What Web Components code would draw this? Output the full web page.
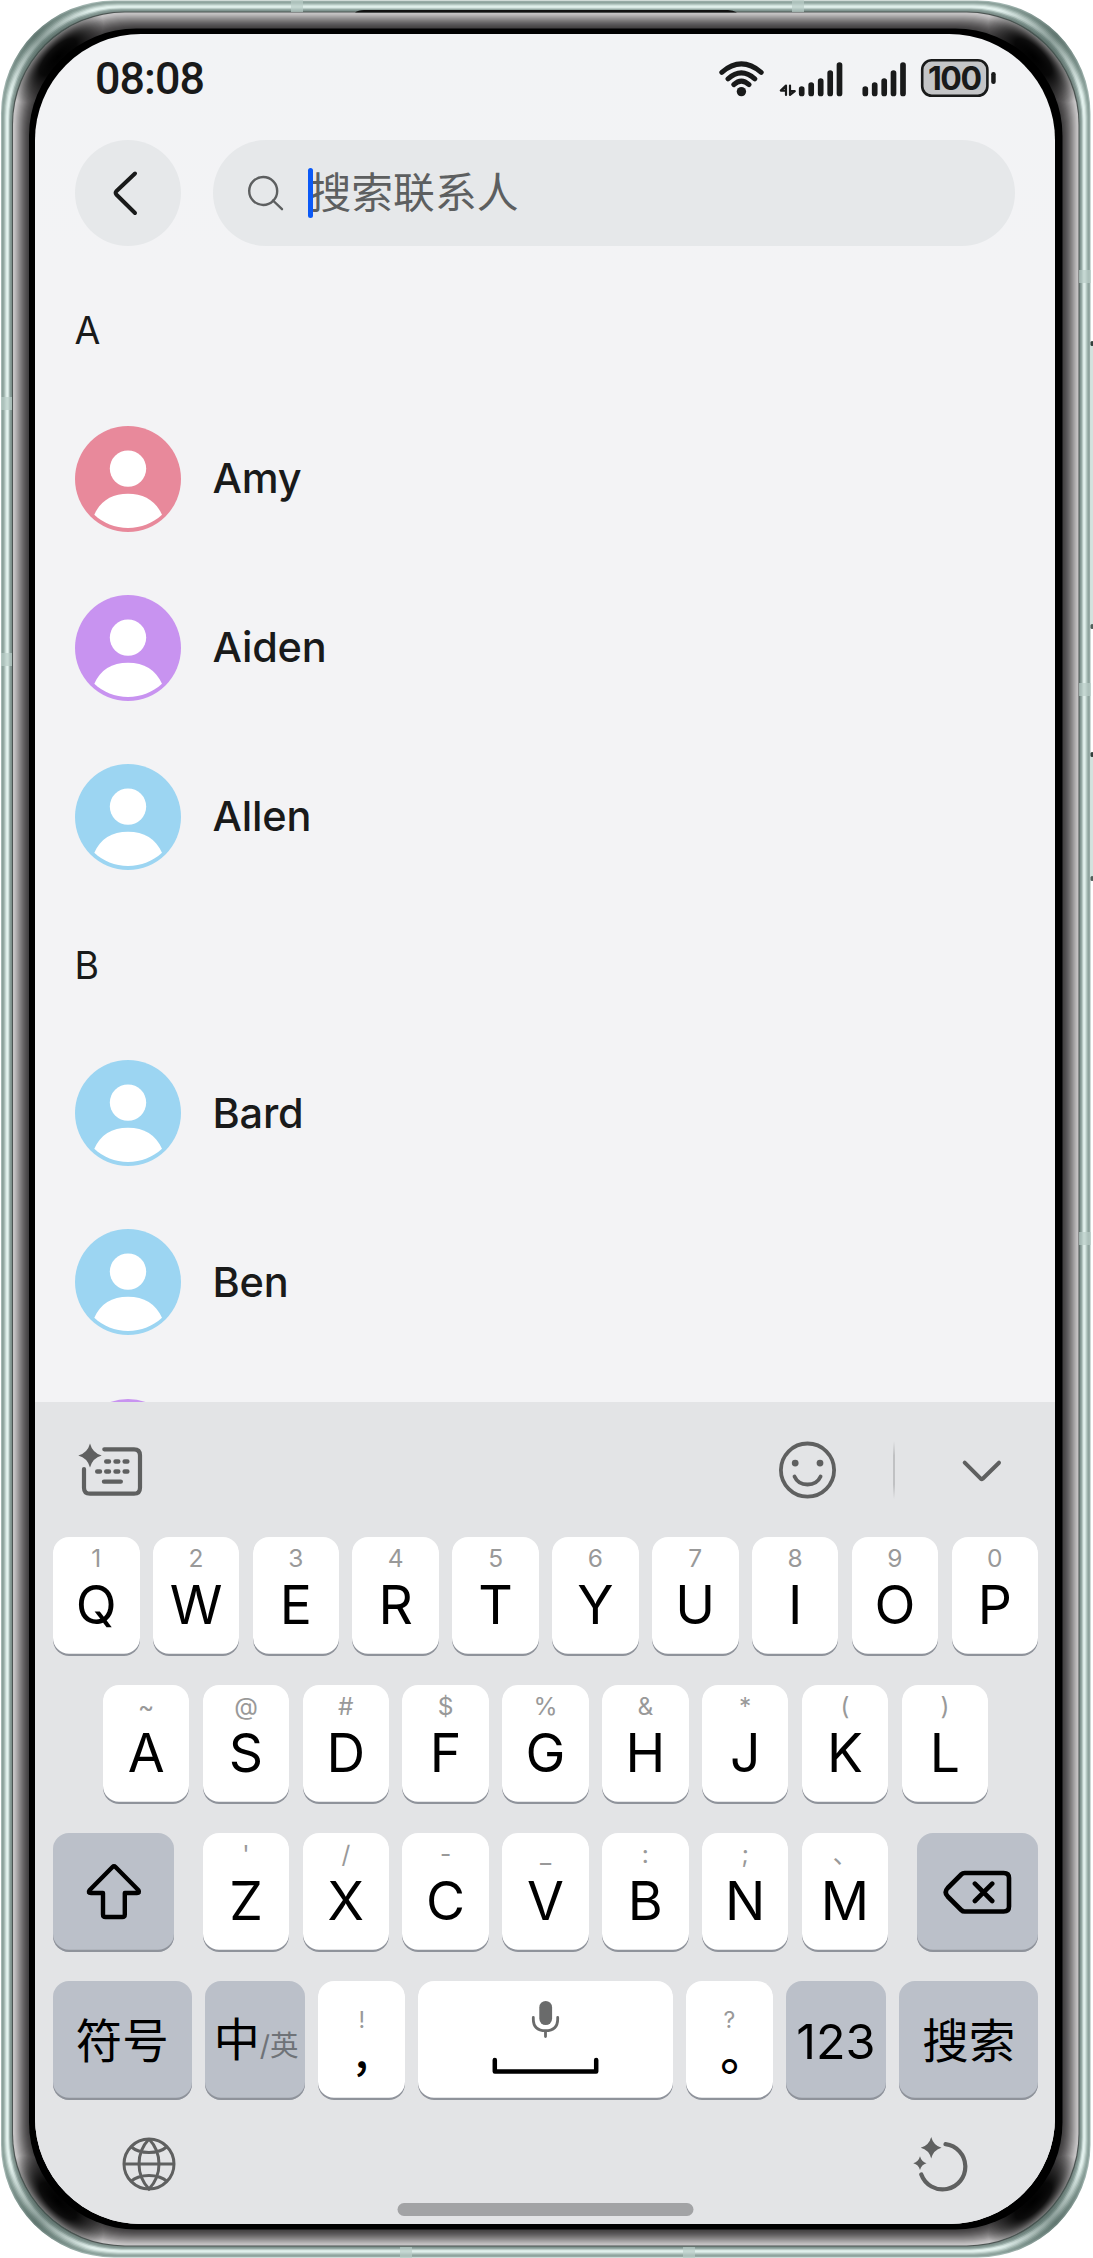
<!DOCTYPE html>
<html lang="zh-CN">
<head>
<meta charset="utf-8">
<title>搜索联系人</title>
<style>
body{margin:0;background:#fff;font-family:Inter,"Noto Sans CJK SC",sans-serif;color:#191a1a}
</style>
</head>
<body>
<phone-shell>
  <status-bar></status-bar>
  <search-header></search-header>
  <contact-list>
    <section-title>A</section-title>
    <contact-row color="#e8899b">Amy</contact-row>
    <contact-row color="#c893f0">Aiden</contact-row>
    <contact-row color="#9cd5f2">Allen</contact-row>
    <section-title>B</section-title>
    <contact-row color="#9cd5f2">Bard</contact-row>
    <contact-row color="#9cd5f2">Ben</contact-row>
    <contact-row color="#c893f0"></contact-row>
  </contact-list>
  <soft-keyboard></soft-keyboard>
</phone-shell>
<script>
const define = (name, html, setup) => customElements.define(name, class extends HTMLElement {
  constructor(){ super(); this.attachShadow({mode:'open'}); }
  connectedCallback(){ this.shadowRoot.innerHTML = html; if (setup) setup(this, this.shadowRoot); }
});

/* Metal rim and glass edge: nested rounded rectangles, outermost first */
define('phone-frame', `<style>:host{display:block;position:absolute;inset:0;z-index:-1}svg{display:block}</style><svg width="1093" height="2258"></svg>`, (el, root) => {
  const rim = ['#a3b7b2','#8ba09a','#93a8a2','#a9bdb7','#c5d6d1','#dcebe7','#e4f3ef','#cfdfdb','#a3b6b1','#879b96','#7d908b','#4d5553'];
  const glass = ['#c6c4c5','#c2c0c1','#b8b6b7','#adabac','#a2a0a1','#979596','#8c8a8b','#828081','#787677','#6e6c6d','#656364','#5d5b5c','#555354','#4e4c4d','#484647','#424142','#000'];
  const box = (i, c) => `<rect x="${1+i}" y="${.5+i}" width="${1089.5-2*i}" height="${2257-2*i}" rx="${i < 12 ? 113-i*.1 : 112-(i-12)*.3}" fill="${c}"/>`;
  let s = '';
  rim.forEach((c,i) => s += box(i,c));
  glass.forEach((c,i) => s += box(12+i,c));
  const seams = [[291,0,12,12],[792,0,12,12],[400,2247,12,11],[683,2247,12,11],[1,397,11,13],[1,653,11,13],[1079,270,12,13],[1079,683,12,13],[1079,1232,12,13]];
  seams.forEach(([x,y,w,h]) => s += `<rect x="${x}" y="${y}" width="${w}" height="${h}" fill="#b9cdc7" opacity=".7"/>`);
  s += `<path d="M355 12.5Q358 10 364 10H728Q733 10 737 12.5Z" fill="#111"/>`;
  s += `<defs><radialGradient id="g"><stop offset="0" stop-color="#000"/><stop offset=".4" stop-color="#000" stop-opacity=".9"/><stop offset="1" stop-color="#000" stop-opacity="0"/></radialGradient><radialGradient id="r"><stop offset="0" stop-color="#3c524c" stop-opacity=".55"/><stop offset="1" stop-color="#3c524c" stop-opacity="0"/></radialGradient>
  <clipPath id="c"><rect x="13" y="12.5" width="1065.5" height="2233" rx="112"/></clipPath><clipPath id="o"><path clip-rule="evenodd" d="M114 .5H977.5A113 113 0 0 1 1090.5 113.5V2144.5A113 113 0 0 1 977.5 2257.5H114A113 113 0 0 1 1 2144.5V113.5A113 113 0 0 1 114 .5ZM125 12.5A112 112 0 0 0 13 124.5V2133.5A112 112 0 0 0 125 2245.5H966.5A112 112 0 0 0 1078.5 2133.5V124.5A112 112 0 0 0 966.5 12.5Z"/></clipPath></defs>`;
  [[1,1,0,0],[-1,1,1091.5,0],[1,-1,0,2258],[-1,-1,1091.5,2258]].forEach(([a,b,x,y]) => {
    s += `<g clip-path="url(#c)"><ellipse transform="translate(${x} ${y}) scale(${a} ${b}) rotate(-45 58 57)" cx="58" cy="57" rx="60" ry="23" fill="url(#g)"/></g><g clip-path="url(#o)"><circle cx="${x+a*36}" cy="${y+b*36}" r="62" fill="url(#r)"/></g>`;
  });
  [[343,627],[754,879]].forEach(([t,b]) => s += `<rect x="1090.5" y="${t}" width="3" height="${b-t}" fill="#d3e3de"/><rect x="1090.5" y="${t-2}" width="3" height="5" rx="1.5" fill="#32403c"/><rect x="1090.5" y="${b-3}" width="3" height="5" rx="1.5" fill="#50605b"/>`);
  root.querySelector('svg').innerHTML = s;
});

define('phone-shell', `<style>
:host{display:block;position:relative;z-index:0;box-sizing:border-box;width:1093px;height:2258px;padding:34px 38px 34px 35px;overflow:hidden}
.screen{display:flex;flex-direction:column;width:1020px;height:2190px;border-radius:106px;overflow:hidden;background:linear-gradient(#f2f3f5,#f3f3f5 240px)}
</style><phone-frame></phone-frame><div class="screen"><slot></slot></div>`);

define('status-bar', `<style>
:host{display:flex;justify-content:space-between;align-items:center;height:106px;box-sizing:border-box;padding:0 58px 17px 60px;flex:none}
time{font:500 44.8px/50px Roboto,sans-serif;letter-spacing:-.9px}
svg{display:block;margin-top:-1px}
</style><time>08:08</time>
<svg width="280" height="40" viewBox="717 57 280 40" fill="none" stroke="#191a1a" stroke-linecap="round">
<g stroke-width="5"><path d="M721.8 71.3Q741.3 54.6 761.2 71.3M728 77.8Q741.3 66 754.8 77.8M733.8 83.6Q741.3 76.5 749 83.6"/></g><circle cx="741.4" cy="90.6" r="4.7" fill="#191a1a" stroke="none"/>
<g stroke-width="5.7"><path d="M801.7 88V92.4M811.2 84V92.4M820.7 80V92.4M830.2 72V92.4M839.5 64V92.4M865.3 88V92.4M874.7 84V92.4M884.2 80V92.4M893.5 72V92.4M903 64V92.4"/></g>
<path d="M786 94V84.5L780.8 89.6H785M790 84.5V94L794.8 90.2H791" stroke-width="2.2" stroke-linejoin="round"/>
<rect x="922.2" y="59.2" width="65.2" height="35.6" rx="9.5" stroke-width="2.6" fill="#c4c5c7"/>
<rect x="991.2" y="71" width="4.5" height="12" rx="2.2" fill="#191a1a" stroke="none"/>
<text x="955" y="88.7" font-family="Inter,sans-serif" font-weight="700" font-size="32" text-anchor="middle" textLength="54" fill="#191a1a" stroke="none">100</text>
</svg>`);

define('search-header', `<style>
:host{display:flex;gap:32px;padding:0 40px;height:106px;margin-bottom:21px;flex:none}
.back{width:106px;border-radius:53px;background:#e6e8ea;display:flex;align-items:center;justify-content:center}
.field{flex:1;border-radius:53px;background:#e6e8ea;display:flex;align-items:center;padding-left:34px;color:#5d5f60;font-size:41.8px;line-height:60px}
.field svg{margin-right:24px}
i{width:5px;height:50px;border-radius:3px;background:#0a59f7;z-index:1;margin-right:-3.5px}
</style><div class="back"><svg width="60" height="60" viewBox="98 163 60 60" fill="none" stroke="#191a1a" stroke-width="4" stroke-linecap="round" stroke-linejoin="round"><path d="M135 173.5L116.3 191.3Q115 192.9 116.3 194.5L135 213"/></svg></div>
<div class="field"><svg width="37" height="37" viewBox="247 175 37 37" fill="none" stroke="#5d5f60" stroke-width="2.4" stroke-linecap="round"><circle cx="263.2" cy="191" r="14"/><path d="M273 200.5L282 209.2"/></svg><i></i><span>搜索联系人</span></div>`);

define('contact-list', `<style>:host{display:flex;flex-direction:column;height:1135px;overflow:hidden;flex:none}</style><slot></slot>`);

define('section-title', `<style>:host{display:flex;align-items:center;height:127px;padding:0 39.5px;flex:none;font-size:37.5px}</style><slot></slot>`);

define('contact-row', `<style>
:host{display:flex;align-items:center;gap:31.5px;height:169.2px;padding-left:40px;flex:none;font-size:41.5px;font-weight:460;letter-spacing:-.2px}
span{margin-top:-1px}
</style><svg width="106" height="106" viewBox="0 0 106 106"><circle class="bg" cx="53" cy="53" r="53"/><g fill="#fff"><circle cx="53" cy="42.6" r="18.2"/><path d="M19.3 88.8C25 75 37 67.8 53 67.8S81 75 87 88.8C78 97 66 102 53 102S28 97 19.3 88.8Z"/></g></svg><span><slot></slot></span>`, (el, root) => root.querySelector('.bg').setAttribute('fill', el.getAttribute('color')));

define('key-cap', `<style>
:host{display:block;width:86.6px;flex:none}
div{box-sizing:border-box;height:118.6px;border-radius:16px;background:#fff;box-shadow:inset 0 -2.2px #8f939b;display:flex;flex-direction:column;align-items:center;color:#000}
:host([dark]) div{background:#bbc0c9;justify-content:center;padding-bottom:1px}
small{height:42px;line-height:42px;font-size:24.5px;color:#999;white-space:pre}
b{font-weight:400;font-size:53.5px;line-height:50px;height:50px;padding-top:.8px}
:host([dark]) b{display:flex;align-items:center;height:auto}
:host([low]) small{padding-top:17.5px;height:42px;font-size:23px}
:host([low]) b{line-height:24px;height:24px;padding:0}
</style><div><small hidden></small><b><slot></slot></b></div>`, (el, root) => {
  const hint = el.getAttribute('hint'), small = root.querySelector('small');
  if (hint) { small.hidden = false; small.textContent = hint; } else small.remove();
  if (el.hasAttribute('wide')) el.style.width = el.getAttribute('wide') + 'px';
});

const keys = (letters, hints) => [...letters].map((c,i) => `<key-cap hint="${hints[i] === '&' ? '&amp;' : hints[i]}">${c}</key-cap>`).join('');
define('soft-keyboard', `<style>
:host{display:flex;flex-direction:column;height:822px;background:#e3e4e6;flex:none}
svg{display:block;flex:none}
.tools{height:135px;display:flex;align-items:center;justify-content:space-between;padding:0 52.5px 0 43px}
.right{display:flex;align-items:center}
.line{width:2px;height:58px;margin:0 66px 0 56px;background:linear-gradient(#c2c3c500,#c0c1c3 25%,#c0c1c3 75%,#c2c3c500)}
.row{display:flex;justify-content:center;gap:13.25px;height:118.6px;margin-bottom:29.5px;padding-left:1px}
.three{gap:28px;padding:0 17px 0 18px;justify-content:space-between}
.three>span{display:flex;gap:13.25px}
.four{margin-bottom:0}
.cn{font-size:46.5px;line-height:60px;padding-top:2px}
.lang{display:flex;align-items:baseline;padding:5px 0 0 2px}
.lang small{font-size:28.5px;color:#6f7378}
.num{font-size:48.5px;padding-top:3px}
.comma{font:500 46px/24px "Noto Sans CJK SC",sans-serif;display:block;margin-top:-5px}
.dot{font:500 48px/24px "Noto Sans CJK SC",sans-serif;padding-left:30px;display:block;margin-top:-4px}
.mic{display:flex;flex-direction:column;align-items:center;height:118px}
.bottom{display:flex;justify-content:space-between;padding:36px 87px 0 86px}
.home{width:296px;height:13px;border-radius:7px;background:#a2a3a5;margin:11.5px auto 0;transform:translateX(.5px)}
</style>
<div class="tools">
<svg width="66" height="56" viewBox="78 1442 66 56" fill="none" stroke="#5f6060" stroke-linecap="round" stroke-width="4.2"><path d="M104.3 1449.3H134Q140 1449.3 140 1455.3V1487.7Q140 1493.7 134 1493.7H90Q84 1493.7 84 1487.7V1469"/><path d="M106.2 1461.5H109M115.5 1461.5H118.3M124.6 1461.5H127.4M97.2 1471.5H100M106.2 1471.5H109M115.5 1471.5H118.3M124.6 1471.5H127.4M104 1481.6H120.8" stroke-width="4.4"/><path d="M90 1443.5Q92.5 1453 101.7 1455.5Q92.5 1458 90 1467.5Q87.5 1458 78.3 1455.5Q87.5 1453 90 1443.5Z" fill="#5f6060" stroke="none"/></svg>
<div class="right"><svg width="58" height="58" viewBox="779 1440.5 58 58" fill="none" stroke="#5f6060" stroke-width="3.8" stroke-linecap="round"><circle cx="807.5" cy="1469.6" r="26.6"/><path d="M794.5 1476Q798 1484 807.5 1484T820.6 1476"/><g fill="#5f6060" stroke="none"><circle cx="795.2" cy="1462.6" r="3.4"/><circle cx="820" cy="1462.6" r="3.4"/></g></svg><span class="line"></span><svg width="42" height="26" viewBox="961 1457.5 42 26" fill="none" stroke="#5f6060" stroke-width="4" stroke-linecap="round" stroke-linejoin="round"><path d="M964.7 1463.2L980.7 1479.2Q981.7 1480 982.7 1479.2L999 1463.2"/></svg></div>
</div>
<div class="row">${keys('QWERTYUIOP','1234567890')}</div>
<div class="row">${keys('ASDFGHJKL','~@#$%&*()')}</div>
<div class="row three"><key-cap dark wide="121.3"><svg width="60" height="60" viewBox="83.5 1862 60 60" fill="none" stroke="#000" stroke-width="4.4" stroke-linejoin="round"><path d="M112 1867Q113.5 1865.5 115 1867L138 1890.3Q139.5 1893 136.5 1893H124.3V1914.5Q124.3 1917 121.8 1917H105Q102.5 1917 102.5 1914.5V1893H90.5Q87 1893 89 1890.3Z"/></svg></key-cap><span>${keys('ZXCVBNM',"'/-_:;、")}</span><key-cap dark wide="121.3"><svg width="70" height="60" viewBox="942.3 1861.5 70 60" fill="none" stroke="#000" stroke-width="4.6" stroke-linecap="round" stroke-linejoin="round"><path d="M965 1872.5H1004Q1009.3 1872.5 1009.3 1877.5V1906Q1009.3 1911 1004 1911H965Q963 1911 961.5 1909.5L948 1896Q944 1891.7 948 1887.5L961.5 1874Q963 1872.5 965 1872.5ZM975.2 1883.2L992.5 1900.5M992.5 1883.2L975.2 1900.5"/></svg></key-cap></div>
<div class="row four"><key-cap dark wide="139.2"><span class="cn">符号</span></key-cap><key-cap dark wide="100"><span class="cn lang"><span style="font-size:46px">中</span><small>/英</small></span></key-cap><key-cap low hint="!"><span class="comma">,</span></key-cap><key-cap wide="254.5"><span class="mic"><svg width="110" height="118" viewBox="491 1982 110 118" fill="none"><rect x="539.3" y="2001" width="12.8" height="24" rx="6.4" fill="#6a6b6b"/><path d="M533.3 2017.5V2019Q533.3 2030.7 545.5 2030.7T557.7 2019V2017.5M545.5 2031V2036.5" stroke="#6a6b6b" stroke-width="2.8" stroke-linecap="round"/><path d="M494.8 2060V2071.6H596.2V2060" stroke="#000" stroke-width="4.5" stroke-linecap="round" stroke-linejoin="round"/></svg></span></key-cap><key-cap low hint="?"><span class="dot">。</span></key-cap><key-cap dark wide="100"><span class="num">123</span></key-cap><key-cap dark wide="139.2"><span class="cn">搜索</span></key-cap></div>
<div class="bottom"><svg width="56" height="56" viewBox="121.3 2135.5 56 56" fill="none" stroke="#5f6060" stroke-width="3"><circle cx="149.3" cy="2163.5" r="25"/><path d="M124 2163.5H174.5M131 2146Q138 2152 149.3 2152T167.6 2146M131 2181Q138 2175 149.3 2175T167.6 2181M149.3 2138.5Q139.3 2149 139.3 2163.5T149.3 2188.5Q159.3 2178 159.3 2163.5T149.3 2138.5"/></svg>
<svg width="56" height="56" viewBox="912.5 2134.5 56 56"><path d="M946 2142.7A22.7 22.7 0 1 1 921.8 2173" fill="none" stroke="#5f6060" stroke-width="4.2" stroke-linecap="round"/><path d="M931.7 2135.5Q934 2144 942 2146.3Q934 2148.5 931.7 2157Q929.5 2148.5 921.2 2146.3Q929.5 2144 931.7 2135.5ZM920.5 2154.8Q922 2160.3 927 2161.7Q922 2163 920.5 2168.5Q919 2163 913.8 2161.7Q919 2160.3 920.5 2154.8Z" fill="#5f6060"/></svg></div>
<div class="home"></div>`);
</script>
</body>
</html>
